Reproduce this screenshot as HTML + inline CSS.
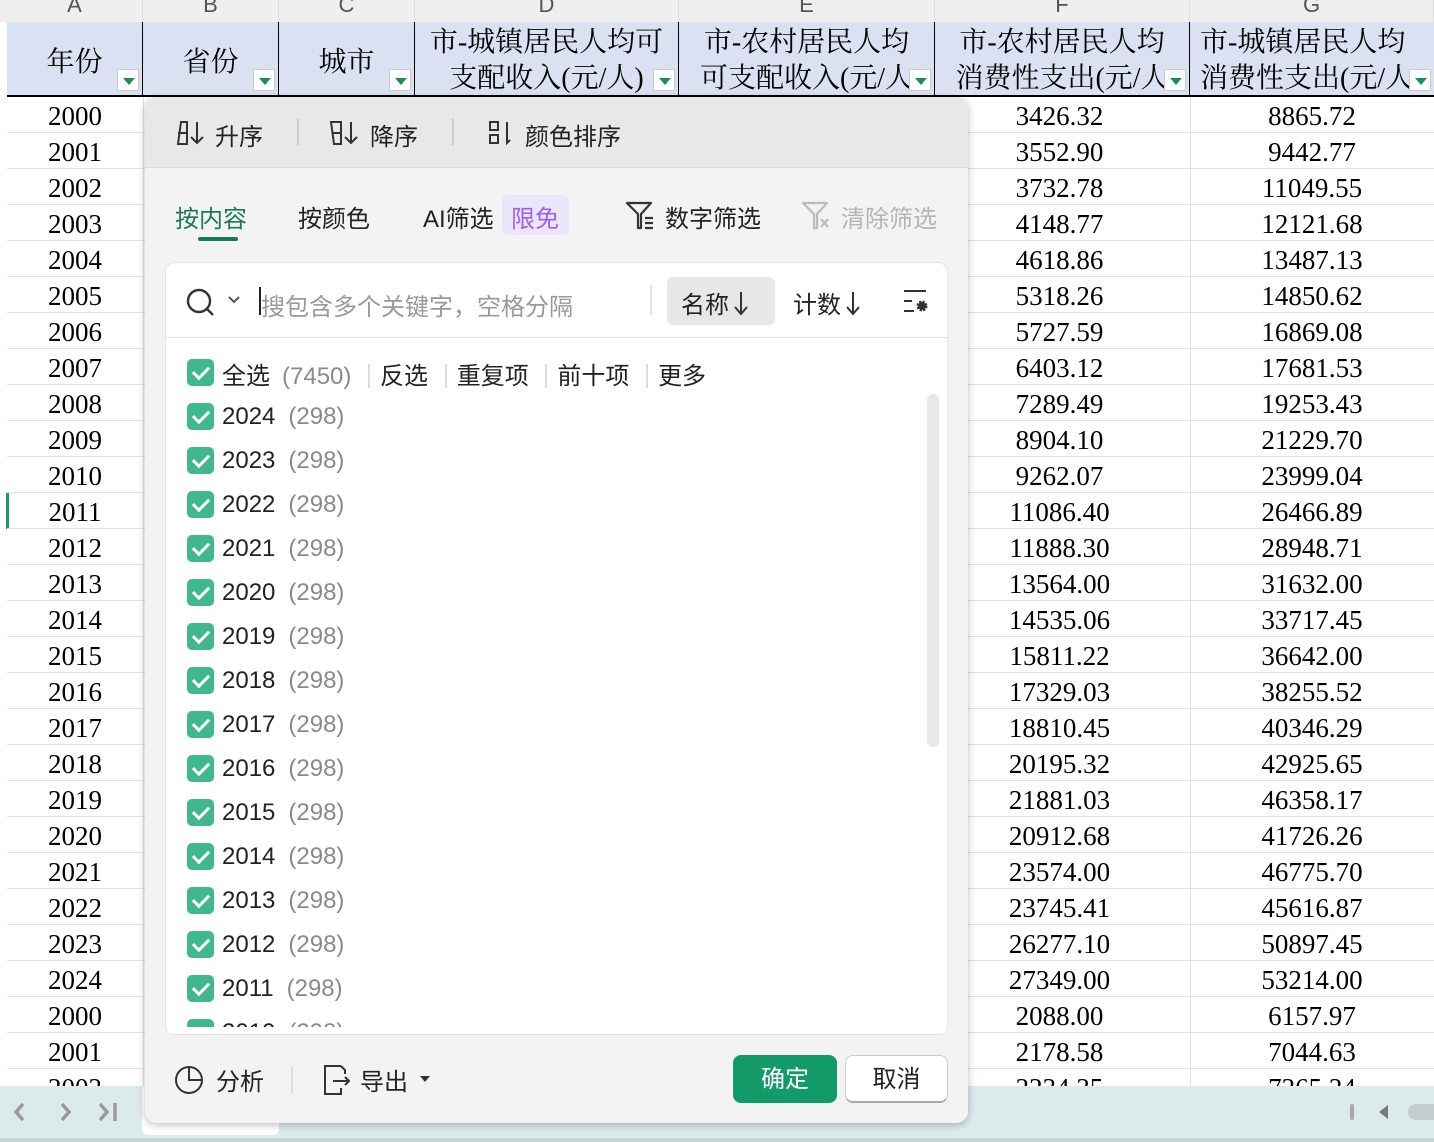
<!DOCTYPE html>
<html><head><meta charset="utf-8"><style>
*{margin:0;padding:0;box-sizing:border-box}
body{width:1434px;height:1142px;overflow:hidden;background:#fff;position:relative;font-family:"Liberation Sans","Noto Sans CJK SC",sans-serif}
.abs{position:absolute}
.colh{position:absolute;top:0;height:22px;background:#efefef;border-right:1px solid #dcdcdc;color:#555;font-size:22px;text-align:center;line-height:10px;overflow:hidden;font-family:"Liberation Sans",sans-serif}
.hc{position:absolute;top:22px;height:75px;background:#d9e1f2;border-right:1px solid #000;border-bottom:2px solid #000;font-family:"Liberation Serif","Noto Serif CJK SC",serif;font-size:28px;color:#000;text-align:center;line-height:36px;padding-top:3px;overflow:hidden;white-space:nowrap}
.fb{position:absolute;width:22px;height:22px;background:#fff;border:1px solid #ccc;bottom:4px;right:3px}
.fb:after{content:"";position:absolute;left:5px;top:8px;border-left:6px solid transparent;border-right:6px solid transparent;border-top:7px solid #1a8f5c}
.row{position:absolute;left:7px;width:1427px;height:36px;border-bottom:1px solid #e2e2e2;font-family:"Liberation Serif",serif;font-size:27px;line-height:38px}
.row span{position:absolute;text-align:center}
.vl{position:absolute;top:97px;height:990px;width:1px;background:#e2e2e2}
.pop{position:absolute;left:145px;top:97px;width:823px;height:1026px;background:#f3f3f3;border-radius:12px;box-shadow:0 2px 8px rgba(0,0,0,.25);overflow:hidden}
.t{position:absolute;white-space:nowrap;font-size:24px;color:#222}
.cb{position:absolute;left:187px;width:27px;height:27px;background:#41b88c;border-radius:5px}
.cb:after{content:"";position:absolute;left:9px;top:4px;width:7px;height:13px;border-right:3px solid #fff;border-bottom:3px solid #fff;transform:rotate(45deg)}
.it{position:absolute;left:222px;font-size:24px;color:#222;white-space:nowrap}
.it i{font-style:normal;color:#8a8a8a;margin-left:13px}
.ar{display:inline-block;vertical-align:-3px;margin-left:4px}
</style></head><body>
<div class="colh" style="left:0;width:7px;border:none"></div>
<div class="colh" style="left:7px;width:136px">A</div>
<div class="colh" style="left:143px;width:136px">B</div>
<div class="colh" style="left:279px;width:136px">C</div>
<div class="colh" style="left:415px;width:264px">D</div>
<div class="colh" style="left:679px;width:256px">E</div>
<div class="colh" style="left:935px;width:255px">F</div>
<div class="colh" style="left:1190px;width:244px">G</div>

<div class="hc" style="left:7px;width:136px;line-height:75px">年份<div class="fb"></div></div>
<div class="hc" style="left:143px;width:136px;line-height:75px">省份<div class="fb"></div></div>
<div class="hc" style="left:279px;width:136px;line-height:75px">城市<div class="fb"></div></div>
<div class="hc" style="left:415px;width:264px">市-城镇居民人均可<br>支配收入(元/人)<div class="fb"></div></div>
<div class="hc" style="left:679px;width:256px">市-农村居民人均<br>可支配收入(元/人<div class="fb"></div></div>
<div class="hc" style="left:935px;width:255px">市-农村居民人均<br>消费性支出(元/人<div class="fb"></div></div>
<div class="hc" style="left:1190px;width:244px;border-right:none;text-align:left;padding-left:10px">市-城镇居民人均<br>消费性支出(元/人<div class="fb"></div></div>

<div class="vl" style="left:143px"></div><div class="vl" style="left:935px"></div><div class="vl" style="left:1190px"></div>
<div class="abs" style="left:6px;top:493px;width:3px;height:36px;background:#1a9a6c"></div>

<div id="rows"></div>
<script>
var y=[2000,2001,2002,2003,2004,2005,2006,2007,2008,2009,2010,2011,2012,2013,2014,2015,2016,2017,2018,2019,2020,2021,2022,2023,2024,2000,2001,2002];
var f=["3426.32","3552.90","3732.78","4148.77","4618.86","5318.26","5727.59","6403.12","7289.49","8904.10","9262.07","11086.40","11888.30","13564.00","14535.06","15811.22","17329.03","18810.45","20195.32","21881.03","20912.68","23574.00","23745.41","26277.10","27349.00","2088.00","2178.58","2234.35"];
var g=["8865.72","9442.77","11049.55","12121.68","13487.13","14850.62","16869.08","17681.53","19253.43","21229.70","23999.04","26466.89","28948.71","31632.00","33717.45","36642.00","38255.52","40346.29","42925.65","46358.17","41726.26","46775.70","45616.87","50897.45","53214.00","6157.97","7044.63","7265.24"];
var h="";for(var i=0;i<y.length;i++){h+='<div class="row" style="top:'+(97+i*36)+'px"><span style="left:0;width:136px">'+y[i]+'</span><span style="left:925px;width:255px">'+f[i]+'</span><span style="left:1183px;width:244px">'+g[i]+'</span></div>';}
document.getElementById("rows").innerHTML=h;
</script>

<div class="abs" style="left:0;top:1086px;width:1434px;height:56px;background:#dbeaea;border-bottom:4px solid #c5d3d3"></div>
<svg class="abs" style="left:12px;top:1101px" width="110" height="22" viewBox="0 0 110 22" fill="none" stroke="#9a9a9a" stroke-width="3.5"><path d="M11 3 L4 11 L11 19"/><path d="M50 3 L57 11 L50 19"/><path d="M88 3 L95 11 L88 19 M103 2 V20"/></svg>
<div class="abs" style="left:142px;top:1086px;width:137px;height:49px;background:#fff;border-radius:0 0 6px 6px"></div>
<div class="abs" style="left:1350px;top:1104px;width:4px;height:16px;background:#aaa;border-radius:2px"></div>
<div class="abs" style="left:1379px;top:1105px;border-top:7px solid transparent;border-bottom:7px solid transparent;border-right:9px solid #777"></div>
<div class="abs" style="left:1408px;top:1104px;width:40px;height:16px;background:#c4cece;border-radius:8px"></div>

<div class="pop">
  <div class="abs" style="left:0;top:0;width:823px;height:71px;background:#e8e8e8;border-bottom:1px solid #ddd"></div>
  <svg class="abs" style="left:30px;top:23px" width="34" height="26" viewBox="0 0 34 26" fill="none" stroke="#333" stroke-width="2"><path d="M3 24 L6 2 H12 V24 Z M3 13 H12"/><path d="M22 2 V23 M16 17 L22 23 L28 17"/></svg>
  <div class="t" style="left:70px;top:20px">升序</div>
  <div class="abs" style="left:152px;top:22px;width:2px;height:26px;background:#ccc"></div>
  <svg class="abs" style="left:184px;top:23px" width="34" height="26" viewBox="0 0 34 26" fill="none" stroke="#333" stroke-width="2"><path d="M2 2 H12 V24 H5 Z M3 13 H12"/><path d="M22 2 V23 M16 17 L22 23 L28 17"/></svg>
  <div class="t" style="left:225px;top:20px">降序</div>
  <div class="abs" style="left:307px;top:22px;width:2px;height:26px;background:#ccc"></div>
  <svg class="abs" style="left:342px;top:23px" width="30" height="26" viewBox="0 0 30 26" fill="none" stroke="#333" stroke-width="2"><rect x="3" y="2" width="8" height="8"/><rect x="3" y="15" width="8" height="8"/><path d="M20 2 V23 L23 20"/></svg>
  <div class="t" style="left:380px;top:20px">颜色排序</div>

  <div class="t" style="left:30px;top:102px;color:#1a7a55">按内容</div>
  <div class="abs" style="left:53px;top:140px;width:40px;height:4px;background:#137a55;border-radius:2px"></div>
  <div class="t" style="left:153px;top:102px">按颜色</div>
  <div class="t" style="left:278px;top:102px">AI筛选</div>
  <div class="abs" style="left:357px;top:98px;width:67px;height:40px;background:#ece6fb;border-radius:6px"></div>
  <div class="t" style="left:366px;top:102px;color:#a05ff0">限免</div>
  <svg class="abs" style="left:480px;top:104px" width="32" height="30" viewBox="0 0 32 30" fill="none" stroke="#333" stroke-width="2.2"><path d="M2 2 H26 L16 13 V27 H13 V13 Z" stroke-linejoin="round"/><path d="M20 17 H28 M20 22 H28 M20 27 H28"/></svg>
  <div class="t" style="left:520px;top:102px">数字筛选</div>
  <svg class="abs" style="left:656px;top:104px" width="32" height="30" viewBox="0 0 32 30" fill="none" stroke="#bbb" stroke-width="2.2"><path d="M2 2 H26 L16 13 V27 H13 V13 Z" stroke-linejoin="round"/><path d="M20 18 L27 26 M27 18 L20 26"/></svg>
  <div class="t" style="left:696px;top:102px;color:#b5b5b5">清除筛选</div>

  <div class="abs" style="left:20px;top:165px;width:783px;height:771px;background:#fff;border-radius:10px;border:1px solid #e5e5e5"></div>
  <svg class="abs" style="left:40px;top:190px" width="32" height="32" viewBox="0 0 32 32" fill="none" stroke="#333" stroke-width="2.4"><circle cx="14" cy="14" r="11"/><path d="M22 22 L28 28"/></svg>
  <svg class="abs" style="left:82px;top:198px" width="14" height="10" viewBox="0 0 14 10" fill="none" stroke="#555" stroke-width="2"><path d="M2 2 L7 7 L12 2"/></svg>
  <div class="abs" style="left:114px;top:190px;width:2px;height:28px;background:#222"></div>
  <div class="t" style="left:116px;top:190px;color:#999">搜包含多个关键字，空格分隔</div>
  <div class="abs" style="left:505px;top:188px;width:2px;height:30px;background:#e3e3e3"></div>
  <div class="abs" style="left:522px;top:180px;width:108px;height:48px;background:#e7e7e7;border-radius:6px"></div>
  <div class="t" style="left:536px;top:188px">名称<svg class="ar" width="16" height="26" viewBox="0 0 16 26" fill="none" stroke="#333" stroke-width="2"><path d="M8 2 V24 M2 17 L8 24 L14 17"/></svg></div>
  <div class="t" style="left:648px;top:188px">计数<svg class="ar" width="16" height="26" viewBox="0 0 16 26" fill="none" stroke="#333" stroke-width="2"><path d="M8 2 V24 M2 17 L8 24 L14 17"/></svg></div>
  <svg class="abs" style="left:757px;top:192px" width="30" height="26" viewBox="0 0 30 26" fill="none" stroke="#333" stroke-width="2"><path d="M2 2 H24 M2 12 H10 M2 22 H12"/><circle cx="20" cy="17" r="4" fill="#333" stroke-width="3" stroke-dasharray="2 1.2"/></svg>
  <div class="abs" style="left:21px;top:240px;width:782px;height:1px;background:#e5e5e5"></div>

  <div class="abs" style="left:782px;top:297px;width:12px;height:353px;background:#e8e8e8;border-radius:6px"></div>
</div>

<div class="cb" style="top:359px"></div>
<div class="it" style="top:356px">全选<i style="margin-left:12px">(7450)</i>
 <span style="display:inline-block;width:2px;height:24px;background:#ddd;margin:0 10px;vertical-align:-4px"></span>反选
 <span style="display:inline-block;width:2px;height:24px;background:#ddd;margin:0 10px;vertical-align:-4px"></span>重复项
 <span style="display:inline-block;width:2px;height:24px;background:#ddd;margin:0 10px;vertical-align:-4px"></span>前十项
 <span style="display:inline-block;width:2px;height:24px;background:#ddd;margin:0 10px;vertical-align:-4px"></span>更多</div>
<div id="items"></div>
<script>
var s="";for(var k=0;k<15;k++){var t=403+k*44;var yr=2024-k;if(t>1030)break;s+='<div class="cb" style="top:'+t+'px"></div><div class="it" style="top:'+t+'px">'+yr+'<i>(298)</i></div>';}
document.getElementById("items").innerHTML=s;
</script>
<div class="abs" style="left:165px;top:1027px;width:783px;height:8px;background:#fff;border-bottom:1px solid #e5e5e5;border-left:1px solid #e5e5e5;border-right:1px solid #e5e5e5;border-radius:0 0 10px 10px"></div>
<div class="abs" style="left:145px;top:1035px;width:823px;height:88px;background:#f3f3f3;border-radius:0 0 12px 12px"></div>

<svg class="abs" style="left:174px;top:1065px" width="30" height="30" viewBox="0 0 30 30" fill="none" stroke="#333" stroke-width="2"><circle cx="15" cy="15" r="13"/><path d="M15 2 V15 H28"/></svg>
<div class="t" style="left:216px;top:1062px">分析</div>
<div class="abs" style="left:291px;top:1067px;width:2px;height:26px;background:#ddd"></div>
<svg class="abs" style="left:321px;top:1064px" width="32" height="32" viewBox="0 0 32 32" fill="none" stroke="#333" stroke-width="2"><path d="M20 2 H4 V30 H20 V24 M20 2 L24 6 V10"/><path d="M12 17 H28 M24 13 L28 17 L24 21"/></svg>
<div class="t" style="left:360px;top:1062px">导出</div>
<svg class="abs" style="left:419px;top:1075px" width="12" height="8" viewBox="0 0 12 8"><path d="M1 1 L6 7 L11 1 Z" fill="#333"/></svg>
<div class="abs" style="left:733px;top:1055px;width:104px;height:48px;background:#129b69;border-radius:8px;color:#fff;font-size:24px;text-align:center;line-height:50px">确定</div>
<div class="abs" style="left:845px;top:1055px;width:103px;height:48px;background:#fff;border:1px solid #ccc;border-bottom:2px solid #aaa;border-radius:8px;color:#222;font-size:24px;text-align:center;line-height:48px">取消</div>
</body></html>
